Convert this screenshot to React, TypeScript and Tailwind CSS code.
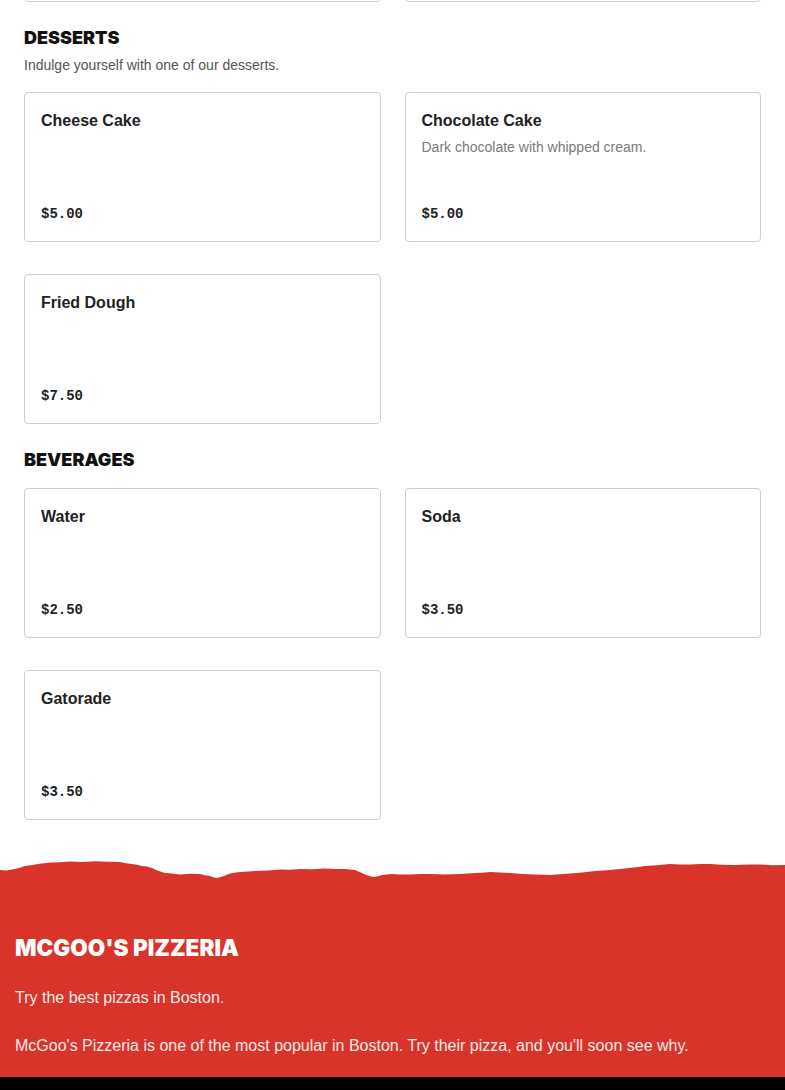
type Item = { name: string; price: string; description?: string };

type Section = { title: string; subtitle?: string; items: Item[] };

const sections: Section[] = [
  {
    title: "Desserts",
    subtitle: "Indulge yourself with one of our desserts.",
    items: [
      { name: "Cheese Cake", price: "$5.00" },
      { name: "Chocolate Cake", price: "$5.00", description: "Dark chocolate with whipped cream." },
      { name: "Fried Dough", price: "$7.50" },
    ],
  },
  {
    title: "Beverages",
    items: [
      { name: "Water", price: "$2.50" },
      { name: "Soda", price: "$3.50" },
      { name: "Gatorade", price: "$3.50" },
    ],
  },
];

const body = "font-['Liberation_Sans','Helvetica',sans-serif]";
const display = "font-['Inter','Liberation_Sans',sans-serif] font-black uppercase";

function MenuCard({ item }: { item: Item }) {
  return (
    <div className="flex h-[150px] flex-col justify-between rounded border border-[#cfcfcf] bg-white p-4">
      <div>
        <h3 className="text-base leading-6 font-bold text-[#222]">{item.name}</h3>
        {item.description && (
          <p className="mt-[4px] text-sm leading-5 text-[#7a7a7a]">{item.description}</p>
        )}
      </div>
      <p className="mb-[1px] font-['Liberation_Mono',monospace] text-sm leading-5 font-bold text-[#222]">
        {item.price}
      </p>
    </div>
  );
}

function TornEdge() {
  return (
    <svg
      viewBox="0 0 785 24"
      preserveAspectRatio="none"
      className="block h-[24px] w-full"
      aria-hidden="true"
    >
      <path
        fill="#d9342a"
        d="M0 13 L6 13.4 L12 12.5 L18 11.2 L25 9 L31 8.2 L38 7 L44 6.3 L50 5.5 L60 5.2 L70 4.6 L82 4.9 L95 4.3 L108 4.8 L120 5 L126 6.2 L132 7 L137 7.8 L142 9 L147 9.6 L152 11 L158 13.8 L165 16 L172 16.4 L180 17.5 L190 16.8 L200 17 L205 18.2 L210 19 L214 20.4 L217 21 L220 20.3 L224 19 L228 17.2 L232 16 L236 15.6 L240 15 L248 14.6 L255 14 L268 13.4 L280 12.5 L290 12.8 L300 12 L312 12.3 L325 11.5 L335 12.1 L345 12 L350 12.6 L355 13 L359 14.8 L362 16 L365 17.6 L368 18.5 L371 19.6 L374 20 L378 19.2 L382 18 L387 17.4 L392 17 L400 17.6 L410 17.5 L420 17.1 L430 17 L445 17.4 L460 17 L468 16.6 L475 16 L482 15.8 L490 15 L500 15.5 L510 16 L522 16.9 L535 17.5 L543 17.7 L550 18 L560 17.3 L570 16.5 L582 15.6 L595 14 L607 13.2 L620 12 L632 10.7 L645 9 L657 8.2 L670 7 L680 7.4 L690 7.5 L700 7.1 L710 7 L722 7.7 L735 8 L748 7.4 L760 7.5 L772 8.2 L785 8 L785 24 L0 24 Z"
      />
    </svg>
  );
}

export default function App() {
  return (
    <div className={`${body} bg-white text-[#222]`}>
      <main className="px-6 pb-[37px]">
        {/* previous section's last row, scrolled mostly out of view */}
        <div className="-mt-[148px] grid grid-cols-2 gap-6">
          <div className="h-[150px] rounded border border-[#cfcfcf]" />
          <div className="h-[150px] rounded border border-[#cfcfcf]" />
        </div>

        {sections.map((section) => (
          <section key={section.title} className="pt-[22px]">
            <h2 className={`${display} text-lg leading-7 text-[#111]`}>{section.title}</h2>
            {section.subtitle && (
              <p className="mt-[3px] text-sm leading-5 text-[#555]">{section.subtitle}</p>
            )}
            <div
              className={`grid grid-cols-2 gap-x-6 gap-y-8 ${
                section.subtitle ? "mt-[17px]" : "mt-[14px]"
              }`}
            >
              {section.items.map((item) => (
                <MenuCard key={item.name} item={item} />
              ))}
            </div>
          </section>
        ))}
      </main>

      <footer>
        <TornEdge />
        <div className="bg-[#d9342a] px-[15px] pt-[53px] pb-[19px] text-white">
          <h2 className={`${display} text-[22.5px] leading-7`}>McGoo's Pizzeria</h2>
          <p className="mt-6 text-base leading-6 text-[#fbe9e7]">
            Try the best pizzas in Boston.
          </p>
          <p className="mt-6 text-base leading-6 text-[#fbe9e7]">
            McGoo's Pizzeria is one of the most popular in Boston. Try their pizza, and you'll soon
            see why.
          </p>
        </div>
        <div className="h-[14px] bg-black" />
      </footer>
    </div>
  );
}
